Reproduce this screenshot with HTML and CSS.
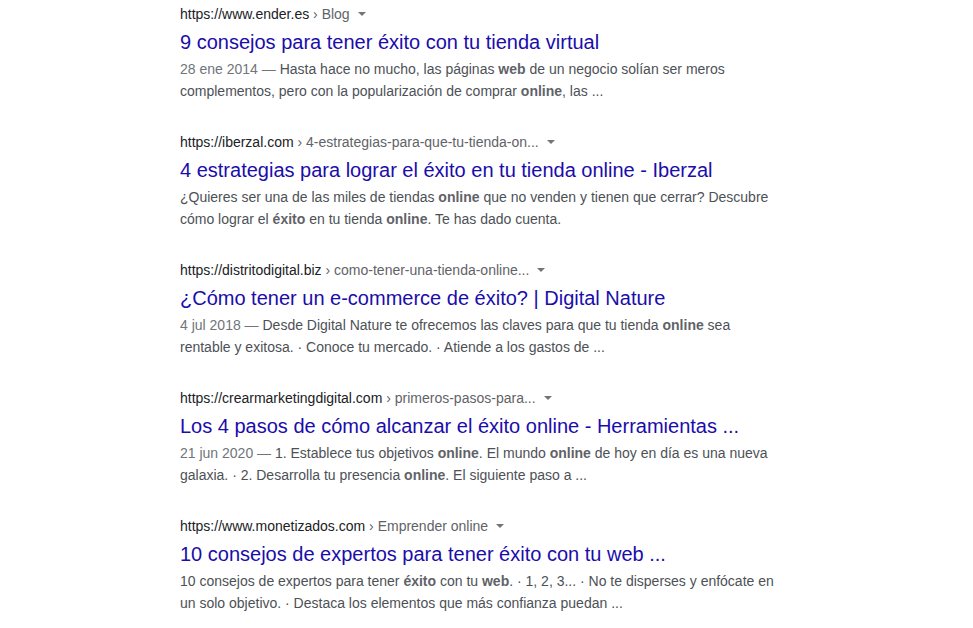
FILE: index.html
```html
<!DOCTYPE html>
<html lang="es">
<head>
<meta charset="utf-8">
<link rel="stylesheet" href="styles.css">
</head>
<body>
<div class="results">
  <div class="result">
    <div class="cite"><span class="host">https://www.ender.es</span><span class="crumb"> › Blog</span><span class="arrow"></span></div>
    <a class="title">9 consejos para tener éxito con tu tienda virtual</a>
    <div class="snippet"><span class="date">28 ene 2014 — </span>Hasta hace no mucho, las páginas <b>web</b> de un negocio solían ser meros complementos, pero con la popularización de comprar <b>online</b>, las ...</div>
  </div>
  <div class="result">
    <div class="cite"><span class="host">https://iberzal.com</span><span class="crumb"> › 4-estrategias-para-que-tu-tienda-on...</span><span class="arrow"></span></div>
    <a class="title">4 estrategias para lograr el éxito en tu tienda online - Iberzal</a>
    <div class="snippet">¿Quieres ser una de las miles de tiendas <b>online</b> que no venden y tienen que cerrar? Descubre cómo lograr el <b>éxito</b> en tu tienda <b>online</b>. Te has dado cuenta.</div>
  </div>
  <div class="result">
    <div class="cite"><span class="host">https://distritodigital.biz</span><span class="crumb"> › como-tener-una-tienda-online...</span><span class="arrow"></span></div>
    <a class="title">¿Cómo tener un e-commerce de éxito? | Digital Nature</a>
    <div class="snippet"><span class="date">4 jul 2018 — </span>Desde Digital Nature te ofrecemos las claves para que tu tienda <b>online</b> sea rentable y exitosa. · Conoce tu mercado. · Atiende a los gastos de ...</div>
  </div>
  <div class="result">
    <div class="cite"><span class="host">https://crearmarketingdigital.com</span><span class="crumb"> › primeros-pasos-para...</span><span class="arrow"></span></div>
    <a class="title">Los 4 pasos de cómo alcanzar el éxito online - Herramientas ...</a>
    <div class="snippet"><span class="date">21 jun 2020 — </span>1. Establece tus objetivos <b>online</b>. El mundo <b>online</b> de hoy en día es una nueva galaxia. · 2. Desarrolla tu presencia <b>online</b>. El siguiente paso a ...</div>
  </div>
  <div class="result">
    <div class="cite"><span class="host">https://www.monetizados.com</span><span class="crumb"> › Emprender online</span><span class="arrow"></span></div>
    <a class="title">10 consejos de expertos para tener éxito con tu web ...</a>
    <div class="snippet">10 consejos de expertos para tener <b>éxito</b> con tu <b>web</b>. · 1, 2, 3... · No te disperses y enfócate en un solo objetivo. · Destaca los elementos que más confianza puedan ...</div>
  </div>
</div>
</body>
</html>
```
FILE: styles.css
```css
html, body {
  margin: 0;
  padding: 0;
  background: #fff;
}
body {
  font-family: "Liberation Sans", Arial, sans-serif;
}
.results {
  padding: 4px 0 0 180px;
  display: flex;
  flex-direction: column;
  gap: 30px;
}
.result {
  width: 600px;
  display: flex;
  flex-direction: column;
}
.cite {
  font-size: 14px;
  line-height: 20px;
  height: 20px;
  display: flex;
  align-items: center;
  white-space: nowrap;
}
.host { color: #202124; }
.crumb { color: #5f6368; white-space: pre; }
.arrow {
  display: inline-block;
  width: 0;
  height: 0;
  margin-left: 8px;
  border-left: 4px solid transparent;
  border-right: 4px solid transparent;
  border-top: 4px solid #70757a;
}
.title {
  margin-top: 5px;
  font-size: 20px;
  line-height: 26px;
  color: #1a0dab;
  text-decoration: none;
}
.snippet {
  margin-top: 3px;
  font-size: 14px;
  line-height: 22px;
  color: #4d5156;
}
.snippet b { color: #5f6368; }
.date { color: #70757a; }
```
